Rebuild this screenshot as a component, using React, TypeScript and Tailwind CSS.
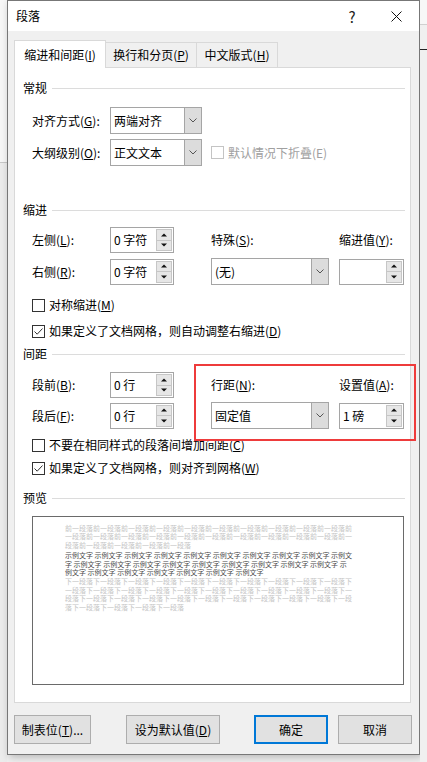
import React from 'react';

function Chevron() {
  return (
    <svg width="8" height="5" viewBox="0 0 8 5">
      <path d="M0.5 0.5 L4 4 L7.5 0.5" fill="none" stroke="#555" strokeWidth="1" />
    </svg>
  );
}

function Combo({ value, className }: { value: string; className: string }) {
  return (
    <div className={`flex h-[27px] border border-[#a5a5a5] bg-white ${className}`}>
      <div className="flex flex-1 items-center pl-[3px]">{value}</div>
      <div className="flex w-[17px] items-center justify-center border-l border-[#a5a5a5] bg-[#dcdcdc]">
        <Chevron />
      </div>
    </div>
  );
}

function Spin({ value, className }: { value: string; className: string }) {
  return (
    <div className={`flex h-[26px] border border-[#a5a5a5] bg-white ${className}`}>
      <div className="flex flex-1 items-center pl-[3px]">{value}</div>
      <div className="my-[1px] mr-[1px] flex w-[16px] flex-col">
        <div className="flex flex-1 items-center justify-center border border-[#c6c6c6] bg-[#e6e6e6]">
          <svg width="6" height="4" viewBox="0 0 6 4">
            <path d="M0 3.5 L3 0.5 L6 3.5 Z" fill="#111" />
          </svg>
        </div>
        <div className="flex flex-1 items-center justify-center border border-t-0 border-[#c6c6c6] bg-[#e6e6e6]">
          <svg width="6" height="4" viewBox="0 0 6 4">
            <path d="M0 0.5 L3 3.5 L6 0.5 Z" fill="#111" />
          </svg>
        </div>
      </div>
    </div>
  );
}

function Check({ checked = false, disabled = false }: { checked?: boolean; disabled?: boolean }) {
  return (
    <span
      className={`flex h-[13px] w-[13px] shrink-0 items-center justify-center border bg-white ${
        disabled ? 'border-[#c4c4c4]' : 'border-[#333333]'
      }`}
    >
      {checked && (
        <svg width="11" height="11" viewBox="0 0 11 11">
          <path d="M1.5 5.5 L4.2 8.2 L9.5 2.5" fill="none" stroke="#333" strokeWidth="1" />
        </svg>
      )}
    </span>
  );
}

function Heading({ text, className }: { text: string; className: string }) {
  return (
    <div className={`flex h-[18px] items-center ${className}`}>
      <span>{text}</span>
      <div className="ml-[5px] h-px flex-1 bg-[#dcdcdc]" />
    </div>
  );
}

const before = '前一段落'.repeat(25);
const sample = Array(26).fill('示例文字').join(' ');
const after = '下一段落'.repeat(35);

export default function App() {
  return (
    <div className="relative flex h-[762px] w-[427px] items-start overflow-hidden bg-[#f0f0f0] font-['Microsoft_YaHei_UI','Noto_Sans_CJK_SC',sans-serif] text-[12px] leading-none text-black">
      {/* word window peeking out on the left */}
      <div className="flex h-full w-[7px] flex-col">
        <div className="h-[163px] border-b border-[#c8c8c8] bg-[#f7f7f7]" />
        <div className="flex-1 bg-[#ececec]" />
      </div>

      {/* dialog */}
      <div className="flex h-[755px] w-[413px] flex-col border border-[#777777] bg-[#f0f0f0] shadow-[2px_2px_8px_rgba(0,0,0,0.25)]">
        {/* title bar */}
        <div className="flex h-[30px] items-center bg-white pl-[8px] pr-[17px]">
          <span>段落</span>
          <span className="ml-auto w-[20px] text-center text-[15px] text-[#222]">?</span>
          <svg className="ml-[29px]" width="11" height="11" viewBox="0 0 11 11">
            <path d="M0.5 0.5 L10.5 10.5 M10.5 0.5 L0.5 10.5" stroke="#111" strokeWidth="1" />
          </svg>
        </div>

        <div className="flex flex-col pl-[6px]">
          {/* tabs */}
          <div className="mt-[9px] flex items-end">
            <div className="relative z-10 -mb-px flex h-[28px] w-[92px] items-center justify-center border border-b-0 border-[#d9d9d9] bg-white">
              缩进和间距(<u>I</u>)
            </div>
            <div className="-ml-px flex h-[25px] w-[92px] items-center justify-center border border-b-0 border-[#d9d9d9] bg-[#f0f0f0]">
              换行和分页(<u>P</u>)
            </div>
            <div className="-ml-px flex h-[25px] w-[82px] items-center justify-center border border-b-0 border-[#d9d9d9] bg-[#f0f0f0]">
              中文版式(<u>H</u>)
            </div>
          </div>

          {/* panel */}
          <div className="flex h-[636px] w-[397px] flex-col border border-[#d9d9d9] bg-white pl-[8px] pr-[5px]">
            <Heading text="常规" className="mt-[11px]" />
            <div className="mt-[10px] flex h-[27px] items-center pl-[9px]">
              <span className="w-[78px]">对齐方式(<u>G</u>):</span>
              <Combo value="两端对齐" className="w-[92px]" />
            </div>
            <div className="mt-[5px] flex h-[27px] items-center pl-[9px]">
              <span className="w-[78px]">大纲级别(<u>O</u>):</span>
              <Combo value="正文文本" className="w-[92px]" />
              <span className="ml-[9px] flex items-center gap-[4px] text-[#a0a0a0]">
                <Check disabled />
                默认情况下折叠(E)
              </span>
            </div>

            <Heading text="缩进" className="mt-[35px]" />
            <div className="mt-[8px] flex h-[26px] items-center pl-[9px]">
              <span className="w-[78px]">左侧(<u>L</u>):</span>
              <Spin value="0 字符" className="w-[64px]" />
              <span className="ml-[37px] w-[118px]">特殊(<u>S</u>):</span>
              <span className="ml-[10px]">缩进值(<u>Y</u>):</span>
            </div>
            <div className="mt-[5px] flex h-[27px] items-center pl-[9px]">
              <span className="w-[78px]">右侧(<u>R</u>):</span>
              <Spin value="0 字符" className="w-[64px]" />
              <Combo value="(无)" className="ml-[37px] w-[118px]" />
              <Spin value="" className="ml-[10px] w-[65px]" />
            </div>
            <div className="mt-[12px] flex h-[16px] items-center gap-[4px] pl-[9px]">
              <Check />
              <span>对称缩进(<u>M</u>)</span>
            </div>
            <div className="mt-[10px] flex h-[16px] items-center gap-[4px] pl-[9px]">
              <Check checked />
              <span>如果定义了文档网格，则自动调整右缩进(<u>D</u>)</span>
            </div>

            <Heading text="间距" className="mt-[6px]" />
            <div className="mt-[9px] flex h-[26px] items-center pl-[9px]">
              <span className="w-[78px]">段前(<u>B</u>):</span>
              <Spin value="0 行" className="w-[64px]" />
              <span className="ml-[37px] w-[118px]">行距(<u>N</u>):</span>
              <span className="ml-[10px]">设置值(<u>A</u>):</span>
            </div>
            <div className="mt-[4px] flex h-[27px] items-center pl-[9px]">
              <span className="w-[78px]">段后(<u>F</u>):</span>
              <Spin value="0 行" className="w-[64px]" />
              <Combo value="固定值" className="ml-[37px] w-[118px]" />
              <Spin value="1 磅" className="ml-[10px] w-[65px]" />
            </div>
            <div className="mt-[8px] flex h-[16px] items-center gap-[4px] pl-[9px]">
              <Check />
              <span>不要在相同样式的段落间增加间距(<u>C</u>)</span>
            </div>
            <div className="mt-[7px] flex h-[16px] items-center gap-[4px] pl-[9px]">
              <Check checked />
              <span>如果定义了文档网格，则对齐到网格(<u>W</u>)</span>
            </div>

            <Heading text="预览" className="mt-[13px]" />
            <div className="ml-[9px] mt-[9px] h-[169px] w-[372px] border border-[#6a6a6a] bg-white pl-[32px] pt-[7px] font-['Noto_Sans_CJK_SC',sans-serif] text-[7px] leading-[8.4px]">
              <div className="w-[288px] break-all text-[#c4c4c4]">{before}</div>
              <div className="mt-[2px] w-[288px] break-all text-[#4a4a4a]">{sample}</div>
              <div className="mt-[1px] w-[288px] break-all text-[#c4c4c4]">{after}</div>
            </div>
          </div>

          {/* buttons */}
          <div className="mt-[12px] flex">
            <button className="flex h-[29px] w-[77px] items-center justify-center border border-[#adadad] bg-[#e1e1e1]">
              制表位(<u>T</u>)...
            </button>
            <button className="ml-[35px] flex h-[29px] w-[94px] items-center justify-center border border-[#adadad] bg-[#e1e1e1]">
              设为默认值(<u>D</u>)
            </button>
            <button className="ml-[34px] flex h-[29px] w-[74px] items-center justify-center border-2 border-[#0078d7] bg-[#e1e1e1]">
              确定
            </button>
            <button className="ml-[10px] flex h-[29px] w-[74px] items-center justify-center border border-[#adadad] bg-[#e1e1e1]">
              取消
            </button>
          </div>
        </div>
      </div>

      {/* word window peeking out on the right */}
      <div className="flex h-full w-[7px] flex-col">
        <div className="h-[25px] border-b border-[#d0d0d0] bg-[#f7f7f7]" />
        <div className="h-[24px] bg-[#f0f0f0]" />
        <div className="h-px bg-[#222]" />
        <div className="flex-1 bg-[#f0f0f0]" />
      </div>

      {/* red annotation frame */}
      <div className="pointer-events-none absolute left-[194px] top-[364px] h-[77px] w-[222px] border-2 border-[#ee3b3b]" />
    </div>
  );
}
